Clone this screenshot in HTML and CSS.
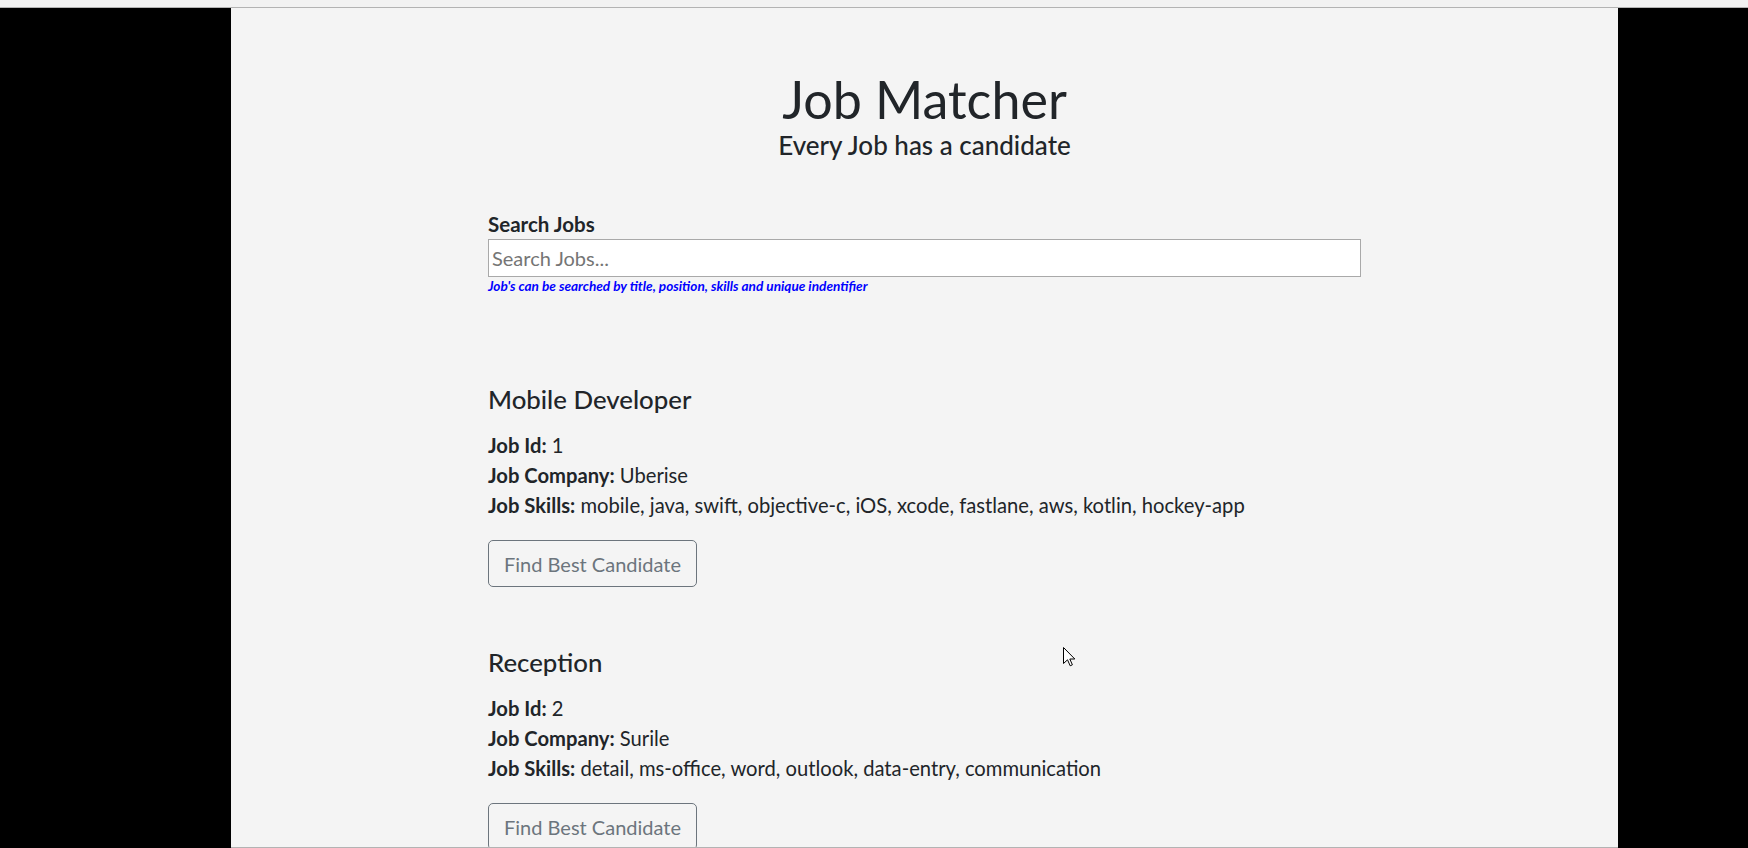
FILE: index.html
```html
<!DOCTYPE html>
<html lang="en">
<head>
<meta charset="utf-8">
<title>Job Matcher</title>
<link rel="stylesheet" href="styles.css">
</head>
<body>
<div class="topbar"></div>
<div class="stage">
  <div class="side"></div>
  <main class="panel">
    <header class="hero">
      <h1 class="title">Job Matcher</h1>
      <h2 class="subtitle">Every Job has a candidate</h2>
    </header>
    <section class="content">
      <div class="search">
        <label class="search-label" for="q">Search Jobs</label>
        <input id="q" class="search-input" type="text" placeholder="Search Jobs...">
        <small class="search-help">Job's can be searched by title, position, skills and unique indentifier</small>
      </div>
      <div class="jobs">
        <article class="job">
          <h3 class="job-title">Mobile Developer</h3>
          <div class="job-details">
            <div class="job-line"><b>Job Id:</b> 1</div>
            <div class="job-line"><b>Job Company:</b> Uberise</div>
            <div class="job-line"><b>Job Skills:</b> mobile, java, swift, objective-c, iOS, xcode, fastlane, aws, kotlin, hockey-app</div>
          </div>
          <button class="btn" type="button">Find Best Candidate</button>
        </article>
        <article class="job">
          <h3 class="job-title">Reception</h3>
          <div class="job-details">
            <div class="job-line"><b>Job Id:</b> 2</div>
            <div class="job-line"><b>Job Company:</b> Surile</div>
            <div class="job-line"><b>Job Skills:</b> detail, ms-office, word, outlook, data-entry, communication</div>
          </div>
          <button class="btn" type="button">Find Best Candidate</button>
        </article>
      </div>
    </section>
  </main>
  <div class="side"></div>
</div>
<svg class="cursor" width="13" height="20" viewBox="0 0 13 20" aria-hidden="true">
  <path d="M0.5 0.5 L0.5 16.5 L4.5 12.8 L7.2 18.8 L9.4 17.8 L6.8 12 L11.8 12 Z" fill="#fff" stroke="#000" stroke-width="1" stroke-linejoin="miter"/>
</svg>
</body>
</html>
```
FILE: styles.css
```css
* { box-sizing: border-box; }

html, body {
  margin: 0;
  padding: 0;
  background: #000;
  overflow: hidden;
}

body {
  font-family: "Lato", "Noto Sans", sans-serif;
  color: #212529;
  width: 1748px;
  height: 848px;
  position: relative;
}

.topbar {
  height: 8px;
  background: #f2f2f2;
  border-bottom: 1px solid #b3b3b3;
}

.stage {
  display: grid;
  grid-template-columns: 231px 1387px 1fr;
  height: 840px;
}

.side { background: #000; }

.panel {
  background: #f4f4f4;
  border-bottom: 1px solid #b3b3b3;
  overflow: hidden;
  padding-top: 60px;
}

.hero { text-align: center; }

.title {
  margin: 0;
  font-size: 52px;
  line-height: 62px;
  font-weight: 400;
}

.subtitle {
  margin: 0;
  font-size: 26px;
  line-height: 30px;
  font-weight: 500;
}

.content {
  width: 873px;
  margin: 52px auto 0;
}

.search-label {
  display: block;
  font-size: 20.5px;
  line-height: 24px;
  font-weight: 700;
  margin-bottom: 3px;
}

.search-input {
  display: block;
  width: 100%;
  height: 38px;
  margin: 0;
  padding: 0 3px;
  border: 1px solid #a9a9a9;
  background: #fff;
  font-family: inherit;
  font-size: 20px;
  color: #212529;
  outline: none;
}

.search-input::placeholder { color: #757575; }

.search-help {
  display: block;
  margin-top: 2px;
  font-size: 13.6px;
  line-height: 15px;
  font-weight: 700;
  font-style: italic;
  color: #0000ff;
}

.jobs { margin-top: 90px; }

.job { margin-bottom: 60px; }

.job-title {
  margin: 0 0 16px;
  font-size: 25.8px;
  line-height: 30px;
  font-weight: 500;
}

.job-details {
  margin-bottom: 20px;
  font-size: 20.2px;
  line-height: 30px;
}

.job-line b { font-weight: 700; }

.btn {
  display: inline-block;
  height: 47px;
  padding: 7.5px 15px;
  border: 1px solid #6c757d;
  border-radius: 5px;
  background: transparent;
  color: #6c757d;
  font-family: inherit;
  font-size: 20px;
  line-height: 30px;
  cursor: pointer;
}

.cursor {
  position: absolute;
  left: 1063px;
  top: 647px;
}
```
